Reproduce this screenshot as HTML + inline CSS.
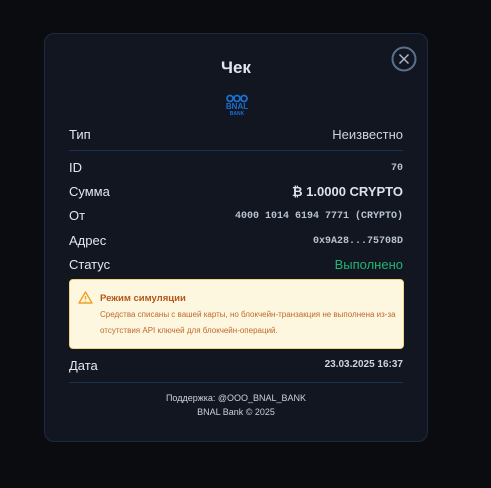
<!DOCTYPE html>
<html><head><meta charset="utf-8"><style>
*{margin:0;padding:0;box-sizing:border-box}
body{width:491px;height:488px;background:#0a0c10;font-family:"Liberation Sans",sans-serif;position:relative;overflow:hidden}
.m{position:absolute;left:44px;top:33px;width:384px;height:409px;background:#111620;border:1px solid #1d2a42;border-radius:10px}
.a{position:absolute;white-space:nowrap}
.l{left:24px;color:#e3e8f0;font-size:13px}
.r{right:24px;color:#cdd5e0;font-size:13px;text-align:right}
.mono{font-family:"Liberation Mono",monospace;font-size:10px;font-weight:bold;color:#b8c2d0}
.hr{position:absolute;left:24px;right:24px;height:1px;background:#1e3050}
</style></head><body>
<div class="m">
<div class="a" style="left:0;right:0;top:24px;text-align:center;color:#dfe6f0;font-size:17px;font-weight:bold">Чек</div>
<svg class="a" style="left:346px;top:12px" width="26" height="26"><circle cx="13" cy="13" r="11.5" fill="none" stroke="#5a6f8e" stroke-width="2"/><path d="M8.5 8.5L17.5 17.5M17.5 8.5L8.5 17.5" stroke="#a8b6c9" stroke-width="1.5"/></svg>
<svg class="a" style="left:180px;top:60px" width="24" height="24"><g fill="none" stroke="#1a6fd0" stroke-width="1.8"><circle cx="5" cy="4.5" r="3"/><circle cx="12" cy="4.5" r="3"/><circle cx="19" cy="4.5" r="3"/></g><text x="12" y="15" font-size="8" font-weight="bold" fill="#1a6fd0" text-anchor="middle" font-family="Liberation Sans">BNAL</text><text x="12" y="21" font-size="5" font-weight="bold" fill="#1a6fd0" text-anchor="middle" font-family="Liberation Sans">BANK</text></svg>
<div class="a l" style="top:93px">Тип</div><div class="a r" style="top:93px">Неизвестно</div>
<div class="hr" style="top:116px"></div>
<div class="a l" style="top:126px">ID</div><div class="a r mono" style="top:129px">70</div>
<div class="a l" style="top:150px">Сумма</div><div class="a r" style="top:150px;font-weight:bold;font-size:13px;color:#dbe2ec">₿ 1.0000 CRYPTO</div>
<div class="a l" style="top:174px">От</div><div class="a r mono" style="top:177px">4000 1014 6194 7771 (CRYPTO)</div>
<div class="a l" style="top:199px">Адрес</div><div class="a r mono" style="top:202px">0x9A28...75708D</div>
<div class="a l" style="top:223px">Статус</div><div class="a r" style="top:223px;color:#22b573">Выполнено</div>
<div class="a" style="left:24px;top:245px;width:335px;height:70px;background:#fef7e0;border:1px solid #f2d57a;border-radius:4px">
<svg class="a" style="left:8px;top:11px" width="15" height="13"><path d="M7.5 1L14 12H1Z" fill="none" stroke="#f0a020" stroke-width="1.4" stroke-linejoin="round"/><path d="M7.5 5v3.5M7.5 10v.8" stroke="#f0a020" stroke-width="1.3"/></svg>
<div class="a" style="left:30px;top:13px;font-size:9.5px;font-weight:bold;color:#b5561a">Режим симуляции</div>
<div class="a" style="left:30px;top:27px;font-size:8px;line-height:16px;color:#c0682a;white-space:normal;width:300px">Средства списаны с вашей карты, но блокчейн-транзакция не выполнена из-за отсутствия API ключей для блокчейн-операций.</div>
</div>
<div class="a l" style="top:324px">Дата</div><div class="a r" style="top:325px;font-size:10px;font-weight:bold">23.03.2025 16:37</div>
<div class="hr" style="top:348px"></div>
<div class="a" style="left:0;right:0;top:357px;text-align:center;font-size:9px;color:#c9d2de;line-height:14px">Поддержка: @OOO_BNAL_BANK<br>BNAL Bank © 2025</div>
</div>
</body></html>
